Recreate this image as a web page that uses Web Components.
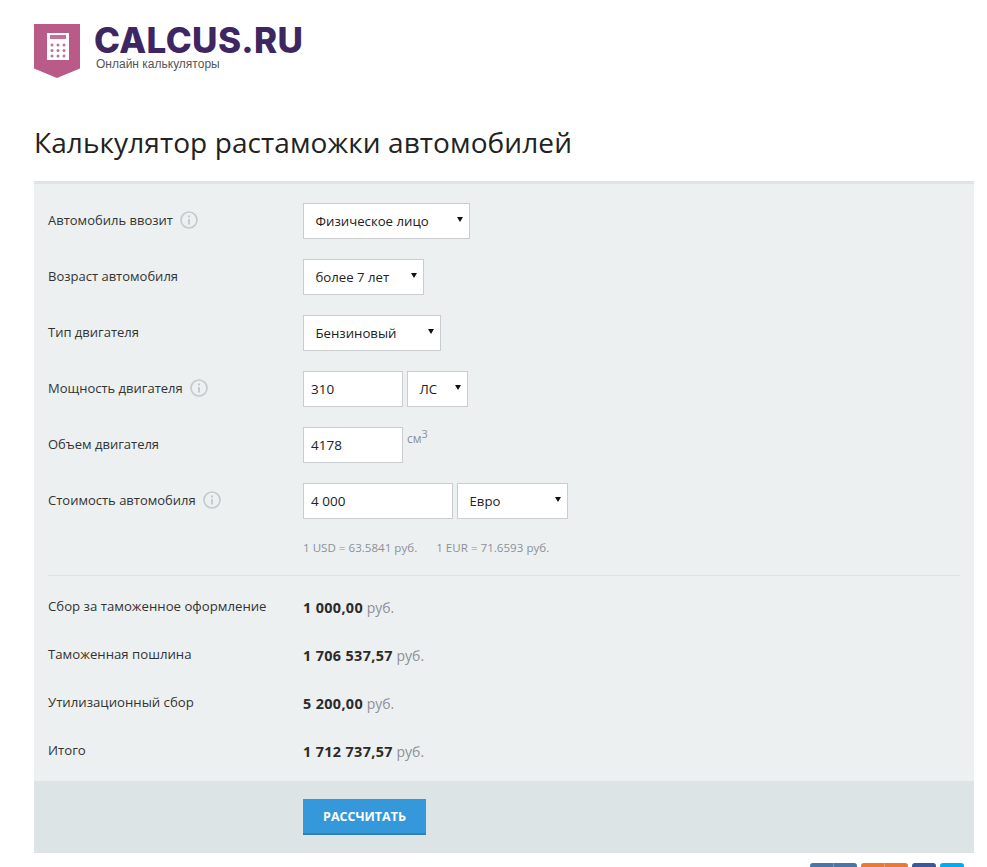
<!DOCTYPE html>
<html lang="ru">
<head>
<meta charset="utf-8">
<title>Калькулятор растаможки автомобилей</title>
<style>
  html, body { margin: 0; height: 867px; overflow: hidden; background: #fff; }
  body { font: 13px "Open Sans", "Liberation Sans", sans-serif; color: #333; }
</style>
</head>
<body>
<calc-page>
  <site-logo slot="logo"></site-logo>
  <h1 slot="title">Калькулятор растаможки автомобилей</h1>
  <calc-panel>
    <calc-row label="Автомобиль ввозит" info><calc-select width="167">Физическое лицо</calc-select></calc-row>
    <calc-row label="Возраст автомобиля"><calc-select width="121">более 7 лет</calc-select></calc-row>
    <calc-row label="Тип двигателя"><calc-select width="138">Бензиновый</calc-select></calc-row>
    <calc-row label="Мощность двигателя" info><calc-field width="100">310</calc-field><calc-select width="61">ЛС</calc-select></calc-row>
    <calc-row label="Объем двигателя"><calc-field width="100">4178</calc-field><calc-unit>см<sup>3</sup></calc-unit></calc-row>
    <calc-row label="Стоимость автомобиля" info><calc-field width="150">4 000</calc-field><calc-select width="111">Евро</calc-select></calc-row>
    <calc-rates slot="rates"><span>1 USD = 63.5841 руб.</span><span>1 EUR = 71.6593 руб.</span></calc-rates>
    <calc-result slot="results" label="Сбор за таможенное оформление">1 000,00</calc-result>
    <calc-result slot="results" label="Таможенная пошлина">1 706 537,57</calc-result>
    <calc-result slot="results" label="Утилизационный сбор">5 200,00</calc-result>
    <calc-result slot="results" label="Итого">1 712 737,57</calc-result>
    <calc-button slot="footer">Рассчитать</calc-button>
  </calc-panel>
  <share-bar></share-bar>
</calc-page>

<script>
// Outer page: logo, title, panel, share buttons
class CalcPage extends HTMLElement {
  constructor() {
    super();
    this.attachShadow({ mode: "open" }).innerHTML = `
    <style>
      :host { display: block; padding: 0 13px 0 34px; }
      ::slotted(h1) {
        margin: 0 0 20px;
        font: 400 28px/38px "Open Sans", "Liberation Sans", sans-serif;
        letter-spacing: 0.09px;
        color: #222;
      }
    </style>
    <slot name="logo"></slot>
    <slot name="title"></slot>
    <slot></slot>`;
  }
}

class SiteLogo extends HTMLElement {
  constructor() {
    super();
    this.attachShadow({ mode: "open" }).innerHTML = `
    <style>
      :host { display: flex; gap: 14px; padding: 24px 0 45px; height: 54px; }
      svg { display: block; flex: none; }
      .name {
        font: 800 35px/32px Inter, "Liberation Sans", sans-serif;
        color: #3d2661;
        letter-spacing: 0.35px;
      }
      .sub {
        margin: 1px 0 0 2px;
        font: 12px/14px "Liberation Sans", sans-serif;
        color: #555;
      }
    </style>
    <svg width="46" height="54" viewBox="0 0 46 54">
      <path d="M0 0H46V44.500L23 54L0 44.500Z" fill="#b95a88"/>
      <rect x="13" y="9" width="22" height="27" fill="#fff"/>
      <rect x="16" y="11" width="16" height="4" fill="#c4709a"/>
      <g fill="#c4709a">
        <circle cx="18" cy="21" r="1.500"/><circle cx="24" cy="21" r="1.500"/><circle cx="30" cy="21" r="1.500"/>
        <circle cx="18" cy="26.500" r="1.500"/><circle cx="24" cy="26.500" r="1.500"/><circle cx="30" cy="26.500" r="1.500"/>
        <circle cx="18" cy="32" r="1.500"/><circle cx="24" cy="32" r="1.500"/><circle cx="30" cy="32" r="1.500"/>
      </g>
    </svg>
    <div>
      <div class="name">CALCUS.RU</div>
      <div class="sub">Онлайн калькуляторы</div>
    </div>`;
  }
}

class CalcPanel extends HTMLElement {
  constructor() {
    super();
    this.attachShadow({ mode: "open" }).innerHTML = `
    <style>
      :host { display: block; background: #ecf0f1; border-top: 3px solid #dde3e6; }
      .form { display: grid; gap: 20px; padding: 19px 14px 0; }
      .rates { padding: 22px 14px 0 269px; }
      hr { margin: 20px 14px 0; border: 0; border-top: 1px solid #dfe3e5; }
      .results { display: grid; gap: 24px; padding: 19px 14px 18px; }
      .footer { padding: 18px 0 18px 269px; background: #dde4e6; }
    </style>
    <div class="form"><slot></slot></div>
    <div class="rates"><slot name="rates"></slot></div>
    <hr>
    <div class="results"><slot name="results"></slot></div>
    <div class="footer"><slot name="footer"></slot></div>`;
  }
}

// Label column + controls column
class CalcRow extends HTMLElement {
  constructor() {
    super();
    this.attachShadow({ mode: "open" });
  }

  connectedCallback() {
    const info = this.hasAttribute("info") ? "<calc-info></calc-info>" : "";
    this.shadowRoot.innerHTML = `
    <style>
      :host { display: grid; grid-template-columns: 255px auto; height: 36px; color: #333; }
      .label { display: flex; align-items: center; gap: 7px; height: 33px; }
      .controls { display: flex; gap: 4px; }
    </style>
    <div class="label"><span>${this.getAttribute("label")}</span>${info}</div>
    <div class="controls"><slot></slot></div>`;
  }
}

class CalcInfo extends HTMLElement {
  constructor() {
    super();
    this.attachShadow({ mode: "open" }).innerHTML = `
    <style>
      :host { display: block; width: 18px; height: 18px; }
      svg { display: block; }
    </style>
    <svg width="18" height="18" viewBox="0 0 18 18" fill="none" stroke="#c5cacc">
      <circle cx="9" cy="9" r="8" stroke-width="1.700"/>
      <path d="M9 8V13.500" stroke-width="2"/>
      <path d="M9 4.500V6.500" stroke-width="2"/>
    </svg>`;
  }
}

class CalcField extends HTMLElement {
  constructor() {
    super();
    this.attachShadow({ mode: "open" });
  }

  connectedCallback() {
    this.shadowRoot.innerHTML = `
    <style>
      :host {
        display: block; box-sizing: border-box; height: 36px;
        width: ${this.getAttribute("width")}px;
        padding-left: 7px; line-height: 34px; font-size: 13.5px;
        background: #fff; border: 1px solid #c9cdd0; color: #222;
      }
    </style>
    <slot></slot>`;
  }
}

class CalcSelect extends HTMLElement {
  constructor() {
    super();
    this.attachShadow({ mode: "open" });
  }

  connectedCallback() {
    this.shadowRoot.innerHTML = `
    <style>
      :host {
        display: block; box-sizing: border-box; position: relative; height: 36px;
        width: ${this.getAttribute("width")}px;
        padding-left: 11.500px; line-height: 34px; font-size: 13.2px;
        background: #fff; border: 1px solid #c9cdd0; color: #222;
      }
      .arrow {
        position: absolute; right: 6px; top: 13px;
        border: 3.500px solid transparent; border-top: 5px solid #111; border-bottom: 0;
      }
    </style>
    <slot></slot><span class="arrow"></span>`;
  }
}

class CalcUnit extends HTMLElement {
  constructor() {
    super();
    this.attachShadow({ mode: "open" }).innerHTML = `
    <style>
      :host { display: block; font-size: 12px; line-height: 24px; color: #8c9196; }
      ::slotted(sup) { font-size: 11px; line-height: 0; }
    </style>
    <slot></slot>`;
  }
}

class CalcRates extends HTMLElement {
  constructor() {
    super();
    this.attachShadow({ mode: "open" }).innerHTML = `
    <style>
      :host { display: flex; gap: 19px; font-size: 11.6px; line-height: 14px; color: #8c9196; }
    </style>
    <slot></slot>`;
  }
}

class CalcResult extends HTMLElement {
  constructor() {
    super();
    this.attachShadow({ mode: "open" });
  }

  connectedCallback() {
    this.shadowRoot.innerHTML = `
    <style>
      :host { display: grid; grid-template-columns: 255px auto; height: 24px; line-height: 22px; font-size: 13.2px; color: #333; }
      .value { line-height: 26px; font-size: 14px; color: #8c9196; }
      b { font-size: 14.4px; letter-spacing: 0.35px; color: #2b2b2b; }
    </style>
    <div>${this.getAttribute("label")}</div>
    <div class="value"><b><slot></slot></b> руб.</div>`;
  }
}

class CalcButton extends HTMLElement {
  constructor() {
    super();
    this.attachShadow({ mode: "open" }).innerHTML = `
    <style>
      :host { display: block; width: 123px; }
      button {
        display: block; box-sizing: border-box; width: 100%; height: 36px; padding: 2px 0 0;
        background: #3498db; color: #fff; border: 0; border-bottom: 2px solid #2f80b5;
        font: 700 12.500px/32px "Open Sans", "Liberation Sans", sans-serif;
        text-transform: uppercase;
      }
    </style>
    <button type="button"><slot></slot></button>`;
  }
}

// Share buttons, cut off by the bottom of the window
class ShareBar extends HTMLElement {
  constructor() {
    super();
    this.attachShadow({ mode: "open" }).innerHTML = `
    <style>
      :host { display: flex; justify-content: flex-end; gap: 4px; padding: 10px 10px 0 0; }
      span { display: block; height: 24px; border-radius: 3px; }
      .wide { width: 47px; }
      .wide::after { content: ""; display: block; width: 1px; height: 24px; margin-left: 23px; background: rgba(255,255,255,.25); }
      .narrow { width: 24px; }
    </style>
    <span class="wide" style="background:#4c75a3"></span>
    <span class="wide" style="background:#e87a38"></span>
    <span class="narrow" style="background:#3b5998"></span>
    <span class="narrow" style="background:#00aced"></span>`;
  }
}

customElements.define("calc-page", CalcPage);
customElements.define("site-logo", SiteLogo);
customElements.define("calc-panel", CalcPanel);
customElements.define("calc-row", CalcRow);
customElements.define("calc-info", CalcInfo);
customElements.define("calc-field", CalcField);
customElements.define("calc-select", CalcSelect);
customElements.define("calc-unit", CalcUnit);
customElements.define("calc-rates", CalcRates);
customElements.define("calc-result", CalcResult);
customElements.define("calc-button", CalcButton);
customElements.define("share-bar", ShareBar);
</script>
</body>
</html>
